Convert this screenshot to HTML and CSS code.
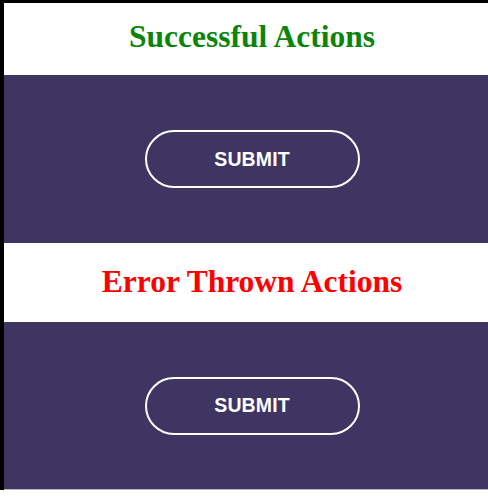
FILE: index.html
```html
<!DOCTYPE html>
<html>
<head>
<meta charset="utf-8">
<link rel="stylesheet" href="styles.css">
</head>
<body>
<div class="page">
  <section class="heading-band first">
    <h1 class="title success">Successful Actions</h1>
  </section>
  <section class="action-band">
    <button class="pill-btn" type="button">SUBMIT</button>
  </section>
  <section class="heading-band second">
    <h1 class="title error">Error Thrown Actions</h1>
  </section>
  <section class="action-band last">
    <button class="pill-btn" type="button">SUBMIT</button>
  </section>
</div>
</body>
</html>
```

FILE: styles.css
```css
html, body {
  margin: 0;
  padding: 0;
  background: #ffffff;
  overflow: hidden;
}

body {
  width: 488px;
  height: 500px;
}

.page {
  width: 496px;
  border-top: 3px solid #000;
  border-left: 4px solid #000;
  background: #fff;
  display: flex;
  flex-direction: column;
}

.heading-band {
  background: #ffffff;
  display: flex;
  justify-content: center;
}

.heading-band.first {
  padding: 16px 0 20px;
}

.heading-band.second {
  padding: 21px 0 22px;
}

.title {
  margin: 0;
  font-family: "Liberation Serif", "Times New Roman", serif;
  font-weight: bold;
  font-size: 31.5px;
  line-height: 36px;
}

.title.success {
  color: #0a850a;
}

.title.error {
  color: #fe0000;
}

.action-band {
  background: #3e3562;
  height: 168px;
  display: flex;
  align-items: center;
  justify-content: center;
}

.action-band.last {
  height: 167px;
  border-bottom: 1px solid #b9b6c8;
}

.pill-btn {
  width: 215px;
  height: 58px;
  box-sizing: border-box;
  border: 2px solid #ffffff;
  border-radius: 29px;
  background: transparent;
  color: #ffffff;
  font-family: "Liberation Sans", Arial, sans-serif;
  font-weight: bold;
  font-size: 19.5px;
  letter-spacing: 0.1px;
  padding: 0;
  cursor: pointer;
}
```
